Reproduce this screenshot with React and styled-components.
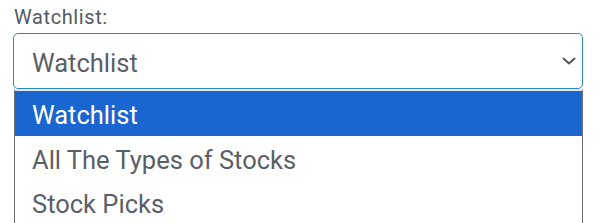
import React, { useState } from 'react'
import styled, { createGlobalStyle } from 'styled-components'

const GlobalStyle = createGlobalStyle`
    body {
        margin: 0;
        background: #ffffff;
        font-family: Roboto, "Liberation Sans", sans-serif;
    }
`
const Wrapper = styled.div`
    padding: 5px 17px 0 13px;
    display: flex;
    flex-direction: column;
`
const Label = styled.label`
    font-size: 20px;
    letter-spacing: 0.6px;
    color: #555a62;
    padding-left: 1px;
    line-height: 24px;
    margin-bottom: 4px;
`
const SelectBox = styled.div`
    height: 56px;
    box-sizing: border-box;
    border: 1.5px solid #2b86c2;
    border-radius: 5px;
    display: flex;
    align-items: center;
    justify-content: space-between;
    padding: 3px 6px 0 18px;
    font-size: 25.5px;
    color: #5a5f67;
`
const Chevron = styled.svg`
    width: 14px;
    height: 8px;
    margin-top: -3px;
    color: #555a62;
`
const List = styled.ul`
    list-style: none;
    margin: 0 0 0 1px;
    padding: 0;
    border-top: 2px solid #e4e4e4;
    border-left: 1px solid #6f6f6f;
    border-right: 1px solid #6f6f6f;
`
const Option = styled.li`
    height: 44.5px;
    box-sizing: border-box;
    display: flex;
    align-items: center;
    padding: 4px 0 0 17px;
    font-size: 25.5px;
    color: ${p => (p.$active ? '#ffffff' : '#5a5f67')};
    background: ${p => (p.$active ? '#1a66d0' : '#ffffff')};
`

const options = ['Watchlist', 'All The Types of Stocks', 'Stock Picks']

const App = () => {
    const [selected, setSelected] = useState('Watchlist')

    return (
        <>
            <GlobalStyle />
            <Wrapper>
                <Label>Watchlist:</Label>
                <SelectBox>
                    <span>{selected}</span>
                    <Chevron viewBox="0 0 14 8" fill="none">
                        <path d="M1.5 1.5l5.5 5 5.5-5" stroke="currentColor" strokeWidth="2" strokeLinecap="round" strokeLinejoin="round" />
                    </Chevron>
                </SelectBox>
                <List>
                    {options.map(o => (
                        <Option key={o} $active={o === selected} onClick={() => setSelected(o)}>
                            {o}
                        </Option>
                    ))}
                </List>
            </Wrapper>
        </>
    )
}

export default App
